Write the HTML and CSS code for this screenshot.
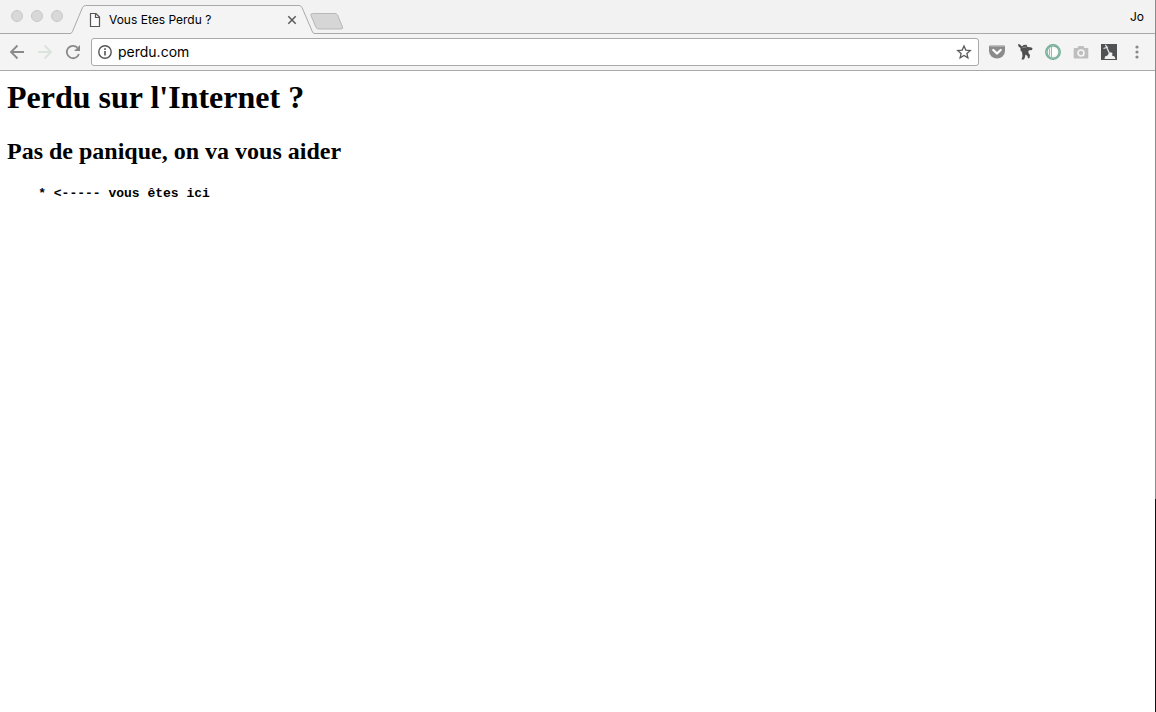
FILE: index.html
```html
<!DOCTYPE html>
<html lang="fr">
<head>
<meta charset="utf-8">
<title>Vous Etes Perdu ?</title>
<link rel="stylesheet" href="styles.css">
</head>
<body>
<div class="window">
  <header class="tab-strip">
    <div class="lights">
      <button class="light" aria-label="Fermer la fenêtre"></button>
      <button class="light" aria-label="Réduire"></button>
      <button class="light" aria-label="Agrandir"></button>
    </div>
    <div class="tab">
      <svg class="tab-shape" viewBox="0 0 244 29" aria-hidden="true">
        <path d="M0 28.500 L1 27 L11.500 2.500 Q12.500 .5 14.500 .5 H228 Q230 .5 231 2.500 L241.500 27 Q242.300 28.500 244 28.500 V29 H0Z" fill="#f4f4f4"/>
        <path d="M-1 28.500 Q.5 28.500 1.500 26.500 L11.500 2.500 Q12.500 .5 14.500 .5 H228 Q230 .5 231 2.500 L241.500 27 Q242.300 28.500 244 28.500" fill="none" stroke="#a9a9a9"/>
      </svg>
      <svg class="page-icon" viewBox="0 0 12 16" aria-hidden="true">
        <path d="M1.500 1.500H7L10.500 5V14.500H1.500ZM6.500 1.500V5.500H10.500" fill="#fbfbfb" stroke="#555" stroke-width="1.200"/>
      </svg>
      <span class="tab-title">Vous Etes Perdu ?</span>
      <button class="tab-close" aria-label="Fermer l'onglet">
        <svg viewBox="0 0 10 10"><path d="M1.300 1.300 8.700 8.700M8.700 1.300 1.300 8.700" stroke="#5a5a5a" stroke-width="1.500"/></svg>
      </button>
    </div>
    <button class="new-tab" aria-label="Nouvel onglet">
      <svg viewBox="0 0 34 17"><path d="M2.500 .5H25Q26.800 .5 27.500 2L32.500 14Q33.300 16 31 16H9Q7 16 6 14.500L1 2.500Q.3 .5 2.500 .5Z" fill="#d6d6d6" stroke="#b8b8b8"/></svg>
    </button>
    <button class="profile">Jo</button>
  </header>

  <nav class="toolbar">
    <button class="tool" aria-label="Précédent">
      <svg viewBox="0 0 16 16"><path d="M15 8H2.500M8.500 1.500 2 8l6.500 6.500" fill="none" stroke="#8a8a8a" stroke-width="1.800"/></svg>
    </button>
    <button class="tool" aria-label="Suivant">
      <svg viewBox="0 0 16 16"><path d="M1 8H13.500M7.500 1.500 14 8l-6.500 6.500" fill="none" stroke="#dce2dc" stroke-width="1.900"/></svg>
    </button>
    <button class="tool" aria-label="Actualiser">
      <svg viewBox="0 0 16 16"><path d="M13.900 10A6.200 6.200 0 1 1 12.400 3.600" fill="none" stroke="#8a8a8a" stroke-width="1.800"/><path d="M15 1V7H9Z" fill="#8a8a8a"/></svg>
    </button>
    <div class="address">
      <svg class="info" viewBox="0 0 14 14" aria-hidden="true"><circle cx="7" cy="7" r="6.200" fill="none" stroke="#555" stroke-width="1.400"/><path d="M7 6V10.500M7 3.300V4.900" stroke="#555" stroke-width="1.600"/></svg>
      <input class="url" type="text" value="perdu.com" aria-label="Adresse">
      <button class="star" aria-label="Ajouter aux favoris">
        <svg viewBox="0 0 16 16"><path d="M8 2 9.800 6.100 14.300 6.500 10.900 9.500 11.900 13.800 8 11.500 4.100 13.800 5.100 9.500 1.700 6.500 6.200 6.100Z" fill="none" stroke="#5c5c5c" stroke-width="1.300"/></svg>
      </button>
    </div>
    <button class="tool" aria-label="Pocket">
      <svg viewBox="0 0 16 16"><path d="M0 2.500Q0 1.500 1 1.500H15Q16 1.500 16 2.500V7A8 7.500 0 0 1 0 7Z" fill="#8b8b8b"/><path d="M1 2.500H15" stroke="#a8a8a8"/><path d="M4.300 6 8 9.500 11.700 6" fill="none" stroke="#fff" stroke-width="2.300" stroke-linecap="round" stroke-linejoin="round"/></svg>
    </button>
    <button class="tool" aria-label="Extension ninja">
      <svg viewBox="0 0 16 16"><path d="M1 0 3 .5 5 2.500 6.500 1 9.500 .8 10.500 3 13.500 3.200 15.500 4 15 6 11.500 6.500 11.500 9 13 11 12.500 14 11 14.500 10.500 12 8.500 10.500 8 13 7 15.500 4.500 15.500 5.500 12 5 8 3.500 6.500 3.500 4 1.500 2.500Z" fill="#505050"/><path d="M5.500 3.500 9.500 3" stroke="#999" stroke-width=".9"/></svg>
    </button>
    <button class="tool" aria-label="Extension Pushbullet">
      <svg viewBox="0 0 16 16"><circle cx="8" cy="8" r="6.700" fill="#f4f7f5" stroke="#69a78e" stroke-width="2.400"/><circle cx="8" cy="8" r="6.700" fill="none" stroke="#a9cfbd" stroke-width=".6"/><path d="M7 4.500H8.500A3.500 3.500 0 0 1 8.500 11.500H7Z" fill="#fff"/><path d="M6.500 3V13M4.500 4.500V11.500" stroke="#86b9a2" stroke-width=".9"/></svg>
    </button>
    <button class="tool" aria-label="Capture d'écran">
      <svg viewBox="0 0 16 16"><path d="M1.500 4H4.500L5.500 2H10.500L11.500 4H14.500Q15.300 4 15.300 5V13.500Q15.300 14.500 14.500 14.500H1.500Q.7 14.500 .7 13.500V5Q.7 4 1.500 4Z" fill="#bebebe"/><circle cx="8" cy="9" r="3" fill="#bebebe" stroke="#f4f4f4" stroke-width="1.700"/></svg>
    </button>
    <button class="tool" aria-label="Extension épée">
      <svg viewBox="0 0 16 16"><path d="M0 0H16V16H0Z" fill="#505254"/><path d="M4.500 .8 8.500 9.500M2.500 4.500 7 3" stroke="#e4e4e4" stroke-width="1.300"/><path d="M3.500 15 4 12.500 6.500 11.500 8 9 9.500 8.300 11.500 9 11 11.500 13.500 12.500 14.500 15Z" fill="#f2f2f2"/></svg>
    </button>
    <button class="tool" aria-label="Menu">
      <svg viewBox="0 0 16 16" fill="#8a8a8a"><circle cx="8" cy="3" r="1.600"/><circle cx="8" cy="8" r="1.600"/><circle cx="8" cy="13" r="1.600"/></svg>
    </button>
  </nav>

  <main class="page">
    <h1 class="headline">Perdu sur l'Internet ?</h1>
    <h2 class="subline">Pas de panique, on va vous aider</h2>
    <pre class="marker">    * &lt;----- vous êtes ici</pre>
  </main>
</div>
</body>
</html>
```
FILE: styles.css
```css
* {
  box-sizing: border-box;
}

body {
  margin: 0;
  background: #fff;
  color: #000;
  font-family: Inter, "Liberation Sans", sans-serif;
}

button {
  padding: 0;
  border: 0;
  background: none;
  color: inherit;
  font: inherit;
}

svg {
  display: block;
}

.window {
  display: flex;
  flex-direction: column;
  min-height: 100vh;
  border-right: 1px solid;
  border-image: linear-gradient(#8c8c8c 70%, #111 70%) 1;
}

.tab-strip {
  display: flex;
  align-items: flex-start;
  height: 34px;
  background: #f2f2f2;
  border-bottom: 1px solid #a9a9a9;
}

.lights {
  display: flex;
  gap: 8px;
  padding: 10px 8px 0 11px;
}

.light {
  width: 12px;
  height: 12px;
  border: 1px solid #c8c8c8;
  border-radius: 50%;
  background: #d8d8d8;
}

.tab {
  position: relative;
  display: flex;
  align-items: center;
  width: 244px;
  height: 29px;
  margin-top: 5px;
  padding: 0 16px 0 18px;
}

.tab-shape {
  position: absolute;
  inset: 0;
  width: 244px;
  height: 29px;
}

.page-icon {
  position: relative;
  width: 12px;
  height: 16px;
}

.tab-title {
  position: relative;
  flex: 1;
  margin-left: 8px;
  font-size: 12px;
  line-height: 16px;
}

.tab-close {
  position: relative;
  width: 10px;
  height: 10px;
  margin-right: 2px;
}

.new-tab {
  width: 34px;
  height: 17px;
  margin: 13px 0 0 -5px;
}

.profile {
  margin: 9px 11px 0 auto;
  font-size: 12px;
  line-height: 16px;
}

.toolbar {
  display: flex;
  align-items: center;
  gap: 12px;
  height: 37px;
  padding: 0 10px 0 9px;
  background: #f4f4f4;
  border-bottom: 1px solid #a9a9a9;
}

.tool {
  flex: none;
  width: 16px;
  height: 16px;
}

.address {
  display: flex;
  flex: 1;
  align-items: center;
  height: 28px;
  margin: 0 -2px 0 -2px;
  padding: 0 6px;
  border: 1px solid #a9a9a9;
  border-radius: 3px;
  background: #fff;
}

.info {
  width: 14px;
  height: 14px;
}

.url {
  flex: 1;
  min-width: 0;
  margin-left: 6px;
  padding: 0;
  border: 0;
  outline: 0;
  background: none;
  color: #000;
  font: 14px/20px Inter, "Liberation Sans", sans-serif;
}

.star {
  width: 16px;
  height: 16px;
}

.page {
  flex: 1;
  padding: 8px 7px;
  font-family: "Liberation Serif", serif;
}

.headline {
  margin: 0 0 22px;
  font-size: 32px;
  line-height: 36px;
}

.subline {
  margin: 0 0 21px;
  font-size: 24px;
  line-height: 28px;
}

.marker {
  margin: 0;
  font: bold 13px/16px "Liberation Mono", monospace;
}
```
